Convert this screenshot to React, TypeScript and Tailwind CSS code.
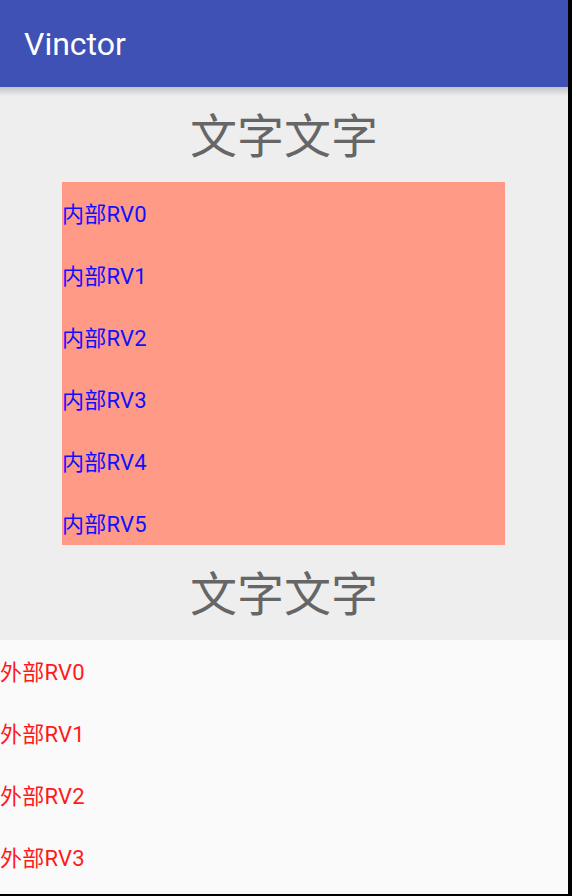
const font = { fontFamily: 'Roboto, "Noto Sans CJK SC", sans-serif' }

const inner = ['内部RV0', '内部RV1', '内部RV2', '内部RV3', '内部RV4', '内部RV5']
const outer = ['外部RV0', '外部RV1', '外部RV2', '外部RV3']

function Heading() {
  return (
    <div className="h-[95px] flex items-center justify-center pt-[4px]">
      <span className="text-[47px] leading-none text-[#666666]">文字文字</span>
    </div>
  )
}

export default function App() {
  return (
    <div className="w-[572px] h-[896px] bg-black overflow-hidden" style={font}>
      <div className="w-[568px] h-[894px] flex flex-col bg-[#fafafa]">
        <header className="h-[87px] shrink-0 bg-[#3f51b5] flex items-center pl-6 relative z-10">
          <span className="text-[32px] text-white leading-none">Vinctor</span>
          <div className="absolute left-0 right-0 top-full h-[9px] bg-gradient-to-b from-[#c4c4c4] to-transparent" />
        </header>

        <section className="bg-[#eeeeee] flex flex-col">
          <Heading />
          <div className="ml-[62px] w-[443px] h-[363px] bg-[#ff9a86] overflow-hidden">
            {inner.map((t) => (
              <div key={t} className="h-[62px] flex items-center pt-[2px] text-[22px] tracking-[0.2px] text-[#1010ff]">
                {t}
              </div>
            ))}
          </div>
          <Heading />
        </section>

        <section className="flex flex-col">
          {outer.map((t) => (
            <div key={t} className="h-[62px] flex items-center pt-[2px] text-[22px] tracking-[0.2px] text-[#ff1a1a]">
              {t}
            </div>
          ))}
        </section>
      </div>
    </div>
  )
}
